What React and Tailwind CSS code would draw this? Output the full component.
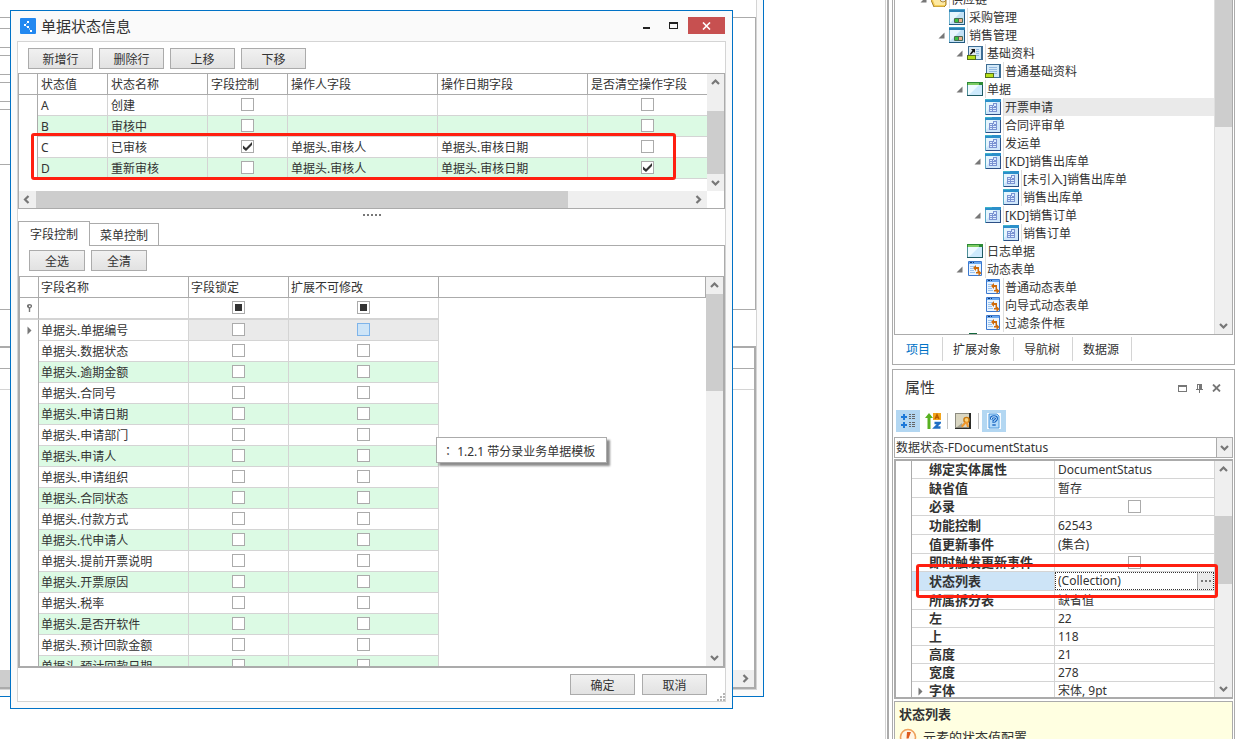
import clsx from 'clsx';

const FONT = "font-['Noto_Sans','Noto_Sans_CJK_SC',sans-serif]";

const estados = [
  { valor: 'A', nombre: '创建', control: false, operador: '', fecha: '', limpiar: false },
  { valor: 'B', nombre: '审核中', control: false, operador: '', fecha: '', limpiar: false },
  { valor: 'C', nombre: '已审核', control: true, operador: '单据头.审核人', fecha: '单据头.审核日期', limpiar: false },
  { valor: 'D', nombre: '重新审核', control: false, operador: '单据头.审核人', fecha: '单据头.审核日期', limpiar: true },
];

const campos = [
  '单据编号', '数据状态', '逾期金额', '合同号', '申请日期', '申请部门', '申请人', '申请组织', '合同状态',
  '付款方式', '代申请人', '提前开票说明', '开票原因', '税率', '是否开软件', '预计回款金额', '预计回款日期',
];

const arbol = [
  { nivel: 0, icono: 'carpeta', texto: '供应链', abierto: true },
  { nivel: 1, icono: 'modulo', texto: '采购管理' },
  { nivel: 1, icono: 'modulo', texto: '销售管理', abierto: true },
  { nivel: 2, icono: 'base', texto: '基础资料', abierto: true },
  { nivel: 3, icono: 'baseHoja', texto: '普通基础资料' },
  { nivel: 2, icono: 'ventana', texto: '单据', abierto: true },
  { nivel: 3, icono: 'documento', texto: '开票申请', activo: true },
  { nivel: 3, icono: 'documento', texto: '合同评审单' },
  { nivel: 3, icono: 'documento', texto: '发运单' },
  { nivel: 3, icono: 'documento', texto: '[KD]销售出库单', abierto: true },
  { nivel: 4, icono: 'documento', texto: '[未引入]销售出库单' },
  { nivel: 4, icono: 'documento', texto: '销售出库单' },
  { nivel: 3, icono: 'documento', texto: '[KD]销售订单', abierto: true },
  { nivel: 4, icono: 'documento', texto: '销售订单' },
  { nivel: 2, icono: 'ventana', texto: '日志单据' },
  { nivel: 2, icono: 'dinamico', texto: '动态表单', abierto: true },
  { nivel: 3, icono: 'dinamico', texto: '普通动态表单' },
  { nivel: 3, icono: 'dinamico', texto: '向导式动态表单' },
  { nivel: 3, icono: 'dinamico', texto: '过滤条件框' },
];

const propiedades = [
  { nombre: '绑定实体属性', valor: 'DocumentStatus' },
  { nombre: '缺省值', valor: '暂存', alta: true },
  { nombre: '必录', tipo: 'check' },
  { nombre: '功能控制', valor: '62543', alta: true },
  { nombre: '值更新事件', valor: '(集合)', alta: true },
  { nombre: '即时触发更新事件', tipo: 'check' },
  { nombre: '状态列表', valor: '(Collection)', tipo: 'editor', alta: true },
  { nombre: '所属拆分表', valor: '缺省值', alta: true },
  { nombre: '左', valor: '22' },
  { nombre: '上', valor: '118' },
  { nombre: '高度', valor: '21' },
  { nombre: '宽度', valor: '278' },
  { nombre: '字体', valor: '宋体, 9pt', expandible: true },
];

const nivelPadding = ['pl-[24px]', 'pl-[42px]', 'pl-[60px]', 'pl-[78px]', 'pl-[96px]'];

// Clases comunes de las dos grillas del diálogo
const TH = 'h-[21px] p-0 pt-[2px] border-b border-r border-[#ababab] font-normal text-left leading-[18px] whitespace-nowrap';
const TD = 'h-[21px] p-0 pt-[2px] border-b border-[#d4d4d4] leading-[18px] whitespace-nowrap';
const TD_CHECK = 'h-[21px] p-0 pt-[3px] border-b border-[#d4d4d4] align-top';

function Chevron({ dir }) {
  const puntos = {
    up: '4,8 7.5,4.5 11,8',
    down: '4,5 7.5,8.5 11,5',
    left: '8.5,3 5,6.5 8.5,10',
    right: '5.5,3 9,6.5 5.5,10',
  };
  return (
    <svg width="15" height="13" viewBox="0 0 15 13" className="block">
      <polyline points={puntos[dir]} fill="none" stroke="#777" strokeWidth="2.2" />
    </svg>
  );
}

function ScrollButton({ dir, label }) {
  return (
    <button type="button" aria-label={label} className="w-[17px] h-[17px] shrink-0 bg-[#efefef] flex items-center justify-center">
      <Chevron dir={dir} />
    </button>
  );
}

function Check({ label, checked = false, mixed = false, focused = false }) {
  return (
    <span className="relative block w-[13px] h-[13px] mx-auto">
      <input
        type="checkbox"
        aria-label={label}
        defaultChecked={checked}
        className={clsx(
          'peer appearance-none block w-[13px] h-[13px] border',
          focused ? 'bg-[#cde4f7] border-[#7eb4ea]' : 'bg-white border-[#ababab]',
        )}
      />
      {mixed ? (
        <span className="absolute left-[3px] top-[3px] w-[7px] h-[7px] bg-[#333] pointer-events-none" />
      ) : (
        <svg viewBox="0 0 13 13" className="absolute inset-0 w-[13px] h-[13px] pointer-events-none hidden peer-checked:block">
          <path d="M2 5.5 L5 8 L11 2 V5 L5 11 L2 8.5 Z" fill="#333" />
        </svg>
      )}
    </span>
  );
}

function WinButton({ children, ancho = 'w-[65px]' }) {
  return (
    <button
      type="button"
      className={clsx('h-[21px] border border-[#ababab] bg-linear-to-b from-[#f1f1f1] to-[#e2e2e2] text-xs leading-[21px] text-center', ancho)}
    >
      {children}
    </button>
  );
}

function TreeIcon({ tipo }) {
  if (tipo === 'carpeta') {
    return (
      <svg width="16" height="16" viewBox="0 0 16 16">
        <path d="M1 4 H7 L8 2 H14 L15 5 V14 L13 16 H3 L0 9 Z" fill="#f5ce55" stroke="#a7802b" />
        <path d="M2 9 H14 V14 H4 Z" fill="#fde9a3" />
        <circle cx="12" cy="8" r="3" fill="#e9ecec" stroke="#b18b3c" />
      </svg>
    );
  }
  if (tipo === 'documento') {
    return (
      <svg width="16" height="16" viewBox="0 0 16 16">
        <rect width="16" height="16" fill="#5aa7c4" />
        <path d="M0 0 H16 V3 H0 Z" fill="#2b8fca" />
        <path d="M0 0 H7 V1 H0 Z" fill="#3fb5c9" />
        <path d="M15 3 H16 V16 H1 V15 H15 Z" fill="#2c4f85" />
        <path d="M1 3 H15 V15 H1 Z" fill="#cfe6fa" />
        <path d="M1 3 H11 L1 13 Z" fill="#e6f5fd" />
        <path d="M4 6 H8 V4 H12 V13 H4 Z" fill="#7b93d2" />
        <path d="M5 7 H7 V8 H5Z M5 9 H7 V10 H5Z M5 11 H7 V12 H5Z M8 7 H9 V8 H8Z M9 5 H11 V7 H9Z M8 9 H11 V10 H8Z M8 11 H11 V12 H8Z" fill="#dcecff" />
      </svg>
    );
  }
  if (tipo === 'ventana') {
    return (
      <svg width="16" height="16" viewBox="0 0 16 16">
        <rect y="1" width="16" height="14" fill="#4d8f98" />
        <path d="M1 4 H15 V14 H1 Z" fill="#cdeafc" />
        <path d="M1 4 H12 L4 12 L1 14 Z" fill="#effaff" />
        <path d="M0 1 H16 V4 H0 Z" fill="#2d8a36" />
        <path d="M1 2 H12 V4 H1 Z" fill="#7ccb62" />
        <path d="M15 4 H16 V15 H0 V14 H15 Z" fill="#1d5a63" />
      </svg>
    );
  }
  if (tipo === 'modulo') {
    return (
      <svg width="16" height="16" viewBox="0 0 16 16">
        <rect width="16" height="16" fill="#6fb2d0" />
        <path d="M1 3 H15 V15 H1 Z" fill="#c3e1f5" />
        <path d="M1 3 H12 L1 14 Z" fill="#e9f6fd" />
        <path d="M0 0 H16 V3 H0 Z" fill="#2a7fb3" />
        <path d="M0 0 H16 V1 H0 Z" fill="#46a5cf" />
        <path d="M15 3 H16 V16 H0 V15 H15 Z" fill="#235a80" />
        <rect x="5" y="9" width="9" height="5" rx="1" fill="#4a6b4f" />
        <path d="M6 10 H9 V13 H6 Z" fill="#38c03e" />
        <path d="M10 10 H13 V13 H10 Z" fill="#efb08e" />
      </svg>
    );
  }
  if (tipo === 'base' || tipo === 'baseHoja') {
    return (
      <svg width="16" height="16" viewBox="0 0 16 16">
        <path d="M1 1 H16 V15 H1 Z" fill="#3d6d94" />
        <path d="M2 2 H14 V14 H2 Z" fill="#d3e9f8" />
        <path d="M4 4 H12 V5 H4Z M4 6 H12 V7 H4Z M4 8 H12 V9 H4Z M9 10 H12 V11 H9Z" fill="#93b8e0" />
        <path d="M0 10 H9 V15 H0 Z" fill="#55701c" />
        <path d="M1 11 H8 V14 H1 Z" fill="#b6e01c" />
        {tipo === 'base' && (
          <>
            <path d="M2 3 H9 V10 H2 Z" fill="#dfe8ee" />
            <path d="M4 4 H8 V8 L6.8 6.8 L4 9.5 H2.5 L5.4 5.4 Z" fill="#111" />
          </>
        )}
      </svg>
    );
  }
  return (
    <svg width="16" height="16" viewBox="0 0 16 16">
      <rect x="1" width="14" height="15" rx="1" fill="#3b78cf" />
      <path d="M2 3 H14 V14 H2 Z" fill="#e9f4ff" />
      <path d="M2 1 H14 V3 H2 Z" fill="#6aa8f0" />
      <path d="M3 1 H5 V2 H3Z M6 1 H7 V2 H6Z" fill="#12386f" />
      <path d="M3 5 H9 V6 H3Z M3 7 H6 V8 H3Z M3 9 H7 V10 H3Z M3 11 H8 V12 H3Z" fill="#9cc3ec" />
      <path d="M6 7 L9 4 V6 H12 V8 H9 V10 Z" fill="#cf6a08" />
      <path d="M14.5 12 L11.5 9 V11 H9 V12.5 H11.5 V15 Z" fill="#cf6a08" />
      <path d="M10.5 7 H12 V11 H10.5 Z" fill="#cf6a08" />
    </svg>
  );
}

function StateGrid() {
  const th = clsx(TH, 'pl-[3px]');
  const td = clsx(TD, 'border-r pl-[3px]');
  return (
    <div className="border border-[#ababab]">
      <div className="flex h-[117px]">
        <div className="relative flex-1 min-w-0">
          <table className="w-full table-fixed border-separate border-spacing-0 text-xs">
            <colgroup>
              <col className="w-[19px]" />
              <col className="w-[70px]" />
              <col className="w-[100px]" />
              <col className="w-[80px]" />
              <col className="w-[150px]" />
              <col className="w-[150px]" />
              <col />
            </colgroup>
            <thead>
              <tr>
                <th className={th} aria-label="行" />
                <th className={th}>状态值</th>
                <th className={th}>状态名称</th>
                <th className={th}>字段控制</th>
                <th className={th}>操作人字段</th>
                <th className={th}>操作日期字段</th>
                <th className={clsx(th, 'border-r-0')}>是否清空操作字段</th>
              </tr>
            </thead>
            <tbody>
              {estados.map((e, i) => (
                <tr key={e.valor} className={i % 2 ? 'bg-[#dcfae4]' : 'bg-white'}>
                  <td className="p-0 bg-white border-r border-[#ababab]" />
                  <td className={td}>{e.valor}</td>
                  <td className={td}>{e.nombre}</td>
                  <td className={clsx(TD_CHECK, 'border-r')}><Check label={`${e.nombre} 字段控制`} checked={e.control} /></td>
                  <td className={td}>{e.operador}</td>
                  <td className={td}>{e.fecha}</td>
                  <td className={TD_CHECK}><Check label={`${e.nombre} 是否清空操作字段`} checked={e.limpiar} /></td>
                </tr>
              ))}
            </tbody>
          </table>
          <div className="absolute left-[12px] top-[59px] w-[645px] h-[47px] border-3 border-[#ff1f10] rounded-[3px] pointer-events-none" />
        </div>
        <div className="w-[17px] bg-[#efefef] flex flex-col">
          <ScrollButton dir="up" label="向上滚动" />
          <div className="h-5" />
          <div className="flex-1 bg-[#cdcdcd]" />
          <ScrollButton dir="down" label="向下滚动" />
        </div>
      </div>
      <div className="flex h-[17px]">
        <ScrollButton dir="left" label="向左滚动" />
        <div className="w-[532px] bg-[#cdcdcd]" />
        <div className="flex-1 bg-[#efefef]" />
        <ScrollButton dir="right" label="向右滚动" />
        <div className="w-[17px] bg-white" />
      </div>
    </div>
  );
}

function FieldGrid() {
  const th = clsx(TH, 'pl-[2px]');
  const indicador = 'p-0 bg-white border-r border-[#ababab]';
  return (
    <div className="flex-1 min-h-0 flex border border-[#ababab]">
      <div className="flex-1 min-w-0 overflow-hidden">
        <table className="w-full table-fixed border-separate border-spacing-0 text-xs">
          <colgroup>
            <col className="w-[19px]" />
            <col className="w-[150px]" />
            <col className="w-[100px]" />
            <col className="w-[150px]" />
            <col />
          </colgroup>
          <thead>
            <tr>
              <th className={th} aria-label="行" />
              <th className={th}>字段名称</th>
              <th className={th}>字段锁定</th>
              <th className={th}>扩展不可修改</th>
              <th className={th} aria-label="空白" />
            </tr>
          </thead>
          <tbody>
            <tr>
              <td className={clsx(indicador, 'h-[22px] border-b-2 border-b-[#d4d4d4]')}>
                <svg width="9" height="10" viewBox="0 0 9 10" className="mx-auto block">
                  <path d="M2 2 Q4.5 0 7 2 V4 L5.2 5.5 V9 H3.8 V5.5 L2 4 Z" fill="#777" />
                  <path d="M4 2.5 H5.5 V4 H4 Z" fill="#fff" />
                </svg>
              </td>
              <td className={clsx(TD, 'border-r border-b-2')} />
              <td className={clsx(TD_CHECK, 'border-r border-b-2')}><Check label="筛选 字段锁定" mixed /></td>
              <td className={clsx(TD_CHECK, 'border-r border-b-2')}><Check label="筛选 扩展不可修改" mixed /></td>
              <td />
            </tr>
            {campos.map((campo, i) => {
              const fondo = i === 0 ? 'bg-[#eaeaea]' : i % 2 === 0 ? 'bg-[#dcfae4]' : 'bg-white';
              return (
                <tr key={campo}>
                  <td className={indicador}>
                    {i === 0 && (
                      <svg width="5" height="9" viewBox="0 0 5 9" className="mx-auto block">
                        <path d="M0.5 0.5 L4.5 4.5 L0.5 8.5 Z" fill="#777" />
                      </svg>
                    )}
                  </td>
                  <td className={clsx(TD, 'border-r pl-[2px]', i === 0 ? 'bg-white' : fondo)}>单据头.{campo}</td>
                  <td className={clsx(TD_CHECK, 'border-r', fondo)}><Check label={`${campo} 字段锁定`} /></td>
                  <td className={clsx(TD_CHECK, 'border-r', fondo)}><Check label={`${campo} 扩展不可修改`} focused={i === 0} /></td>
                  <td />
                </tr>
              );
            })}
          </tbody>
        </table>
      </div>
      <div className="w-[17px] bg-[#efefef] flex flex-col">
        <ScrollButton dir="up" label="向上滚动" />
        <div className="h-[97px] bg-[#cdcdcd]" />
        <div className="flex-1" />
        <ScrollButton dir="down" label="向下滚动" />
      </div>
    </div>
  );
}

function BackWindow() {
  return (
    <div className="absolute left-0 top-0 w-[764px] h-[697px] bg-[#fafafa] border-r border-b border-[#0072c6] pr-[6px] pb-[6px]">
      <div className="h-full bg-white border-r border-b border-[#d4d4d4] pt-[17px] flex flex-col gap-[36px]">
        <div className="h-[293px] border-y border-r border-[#ababab] pt-[10px] flex flex-col gap-[7px]">
          <div className="h-5 w-1/2 border-y border-[#ababab]" />
          <div className="h-5 w-1/2 border-y border-[#ababab]" />
          <div className="h-5 w-1/2 border-y border-[#ababab]" />
          <div className="h-14 w-1/2 border-y border-[#ababab]" />
        </div>
        <div className="flex-1 border-y-2 border-r-2 border-[#ababab] flex flex-col">
          <div className="h-[21px] border-b border-[#ababab]" />
          <div className="h-[21px] border-b border-[#d4d4d4]" />
          <div className="flex-1" />
          <div className="h-[17px] flex bg-[#efefef]">
            <div className="w-1/2 bg-[#cdcdcd]" />
            <div className="flex-1" />
            <ScrollButton dir="right" label="向右滚动" />
          </div>
        </div>
      </div>
    </div>
  );
}

function StatusDialog() {
  return (
    <section
      role="dialog"
      aria-label="单据状态信息"
      className="absolute left-[10px] top-[10px] w-[723px] h-[699px] bg-[#fafafa] border border-[#0072c6] px-[6px] pb-[6px] flex flex-col"
    >
      <header className="h-[30px] flex items-center pl-[3px] pr-[1px]">
        <svg width="16" height="16" viewBox="0 0 16 16">
          <rect width="16" height="16" rx="1" fill="#2288f0" />
          <path d="M7 3 H9 V5 H7Z M4 6 H6 V8 H4Z M7 8 H9 V10 H7Z M10 12 H12 V14 H10Z" fill="#fff" />
          <path d="M6 5 H7 V6 H6Z M6 8 H7 V9 H6Z M9 10 H10 V12 H9Z" fill="#8fc3fa" />
        </svg>
        <h1 className="ml-[5px] flex-1 text-[15px] leading-5">单据状态信息</h1>
        <div className="flex items-center self-start pt-[6px]">
          <button type="button" aria-label="最小化" className="w-[27px] h-[17px] flex items-center justify-center">
            <svg width="9" height="9" viewBox="0 0 9 9"><path d="M1 6 H8 V8 H1 Z" fill="#222" /></svg>
          </button>
          <button type="button" aria-label="最大化" className="w-[27px] h-[17px] flex items-center justify-center">
            <svg width="9" height="7" viewBox="0 0 9 7"><path d="M0 0 H9 V7 H0 Z M1 2 V6 H8 V2 Z" fill="#222" fillRule="evenodd" /></svg>
          </button>
          <button type="button" aria-label="关闭" className="w-[37px] h-[17px] ml-[1px] bg-[#c75050] flex items-center justify-center">
            <svg width="9" height="8" viewBox="0 0 9 8"><path d="M1 0.5 L8 7.5 M8 0.5 L1 7.5" stroke="#fff" strokeWidth="1.6" /></svg>
          </button>
        </div>
      </header>
      <div className="flex-1 min-h-0 bg-white border border-[#d4d4d4] flex flex-col">
        <div className="flex gap-[6px] pl-[10px] pt-[6px] pb-[4px]">
          <WinButton>新增行</WinButton>
          <WinButton>删除行</WinButton>
          <WinButton>上移</WinButton>
          <WinButton>下移</WinButton>
        </div>
        <StateGrid />
        <div className="h-3 pt-[5px] flex justify-center gap-[2px]">
          {[0, 1, 2, 3, 4].map((n) => (
            <span key={n} className="w-[2px] h-[2px] bg-[#777]" />
          ))}
        </div>
        <div role="tablist" className="flex items-end">
          <button type="button" role="tab" aria-selected="true" className="w-[72px] h-[25px] pt-[2px] border-t border-x border-[#ababab] text-xs">
            字段控制
          </button>
          <button type="button" role="tab" aria-selected="false" className="w-[69px] h-[23px] pt-[2px] border-t border-r border-b border-[#ababab] text-xs">
            菜单控制
          </button>
          <div className="flex-1 border-b border-[#ababab]" />
        </div>
        <div className="flex-1 min-h-0 border-x border-b border-[#ababab] flex flex-col">
          <div className="flex gap-[6px] pl-[10px] pt-[4px] pb-[5px]">
            <WinButton ancho="w-[56px]">全选</WinButton>
            <WinButton ancho="w-[56px]">全清</WinButton>
          </div>
          <FieldGrid />
        </div>
        <footer className="relative h-[33px] flex justify-end gap-[7px] pt-[6px] pr-[18px]">
          <WinButton>确定</WinButton>
          <WinButton>取消</WinButton>
          <svg width="8" height="8" viewBox="0 0 8 8" className="absolute right-0 bottom-0">
            <path d="M6 0 H8 V2 H6Z M3 3 H5 V5 H3Z M6 3 H8 V5 H6Z M0 6 H2 V8 H0Z M3 6 H5 V8 H3Z M6 6 H8 V8 H6Z" fill="#b5b5b5" />
          </svg>
        </footer>
      </div>
    </section>
  );
}

function TreeRow({ nodo }) {
  return (
    <li className={clsx('h-[18px] flex items-center', nivelPadding[nodo.nivel])}>
      <span className="w-[12px] shrink-0">
        {nodo.abierto && (
          <svg width="7" height="7" viewBox="0 0 7 7" className="ml-[1px]">
            <path d="M6.5 0.5 V6.5 H0.5 Z" fill="#777" />
          </svg>
        )}
      </span>
      <span className="w-[19px] h-[18px] shrink-0 border-r border-[#dedede] flex items-center">
        <TreeIcon tipo={nodo.icono} />
      </span>
      <a
        href="#arbol"
        className={clsx('flex-1 h-[18px] pl-[1px] text-xs leading-5 whitespace-nowrap', nodo.activo && 'bg-[#eaeaea]')}
      >
        {nodo.texto}
      </a>
    </li>
  );
}

function ProjectPanel() {
  return (
    <section className="h-[365px] shrink-0 border-x border-b border-[#ababab] px-[1px] flex flex-col">
      <div className="h-[335px] border-x border-b border-[#ababab] flex overflow-hidden">
        <ul className="flex-1 -mt-[10px]">
          {arbol.map((nodo, i) => (
            <TreeRow key={i} nodo={nodo} />
          ))}
          <li className="pl-[72px]">
            <span className="block ml-[2px] w-[8px] h-[3px] bg-[#12683c] mt-[1px]" />
          </li>
        </ul>
        <div className="w-[18px] border-l border-[#dedede] bg-[#efefef] flex flex-col">
          <div className="h-[127px] bg-[#cdcdcd]" />
          <div className="flex-1" />
          <ScrollButton dir="down" label="向下滚动" />
        </div>
      </div>
      <div role="tablist" className="flex pl-[2px] pt-[2px]">
        {['项目', '扩展对象', '导航树', '数据源'].map((tab, i) => (
          <button
            key={tab}
            type="button"
            role="tab"
            aria-selected={i === 0}
            className={clsx('h-6 pt-[2px] pl-[10px] pr-[12px] border-r border-[#d4d4d4] text-xs', i === 0 && 'text-[#0072c6]')}
          >
            {tab}
          </button>
        ))}
      </div>
    </section>
  );
}

function PropertyToolbar() {
  return (
    <div className="h-[22px] pl-[2px] flex items-center">
      <button type="button" aria-label="按分类排列" className="w-6 h-[22px] bg-[#b3d7f2] flex items-center justify-center">
        <svg width="16" height="16" viewBox="0 0 16 16">
          <path d="M3 1 H5 V3 H7 V5 H5 V7 H3 V5 H1 V3 H3Z M3 9 H5 V11 H7 V13 H5 V15 H3 V13 H1 V11 H3Z" fill="#1c78d8" />
          <path d="M9 1 H11 V2 H9Z M12 1 H15 V2 H12Z M9 3 H11 V4 H9Z M12 3 H15 V4 H12Z M9 5 H11 V6 H9Z M12 5 H15 V6 H12Z M9 9 H11 V10 H9Z M12 9 H15 V10 H12Z M9 11 H11 V12 H9Z M12 11 H15 V12 H12Z M9 13 H11 V14 H9Z M12 13 H15 V14 H12Z" fill="#666" />
        </svg>
      </button>
      <button type="button" aria-label="按字母排列" className="w-6 h-[22px] ml-[1px] flex items-center justify-center">
        <svg width="16" height="16" viewBox="0 0 16 16">
          <path d="M4 0 L8 5 H5.5 V16 H2.5 V5 H0 Z" fill="#58b121" />
          <path d="M8 0 H16 V7 H8 Z" fill="#f3a51c" />
          <path d="M10 6 L12 1.5 L14 6 M11 4.5 H13" fill="none" stroke="#b85c00" strokeWidth="1.3" />
          <path d="M9.5 10 H14.5 L10 14.5 H15.5" fill="none" stroke="#1f6fc4" strokeWidth="2.4" />
        </svg>
      </button>
      <span className="w-px h-4 bg-[#c4c4c4] ml-[2px] mr-[5px]" />
      <button type="button" aria-label="属性页" className="w-5 h-[22px] flex items-center justify-center">
        <svg width="16" height="16" viewBox="0 0 16 16">
          <rect width="15" height="15" fill="#8c8b80" />
          <rect x="1" y="1" width="14" height="13" fill="#d9d6c2" />
          <path d="M14 0 H16 V16 H0 V15 H14 Z" fill="#2b2b28" />
          <path d="M2 14 L7 10 L8 14 Z" fill="#a5a393" />
          <circle cx="11.5" cy="7" r="2.6" fill="#fbd27a" stroke="#c97a10" strokeWidth="1.4" />
          <path d="M10 8.5 L6 13 L7.5 14.5 L11 10.5 L12 14 H14 L13 9 Z" fill="#f0972c" />
        </svg>
      </button>
      <span className="w-px h-4 bg-[#c4c4c4] ml-[5px] mr-[3px]" />
      <button type="button" aria-label="帮助" className="w-6 h-[22px] bg-[#b3d7f2] flex items-center justify-center">
        <svg width="16" height="16" viewBox="0 0 16 16">
          <rect x="1" width="14" height="16" fill="#f7fbff" />
          <path d="M3 1 H11 L13 3 V15 H3 Z" fill="#b5dbfa" stroke="#4a98dd" />
          <path d="M5.5 6.5 V5 Q5.5 3.8 8 3.8 Q10.5 3.8 10.5 5.5 Q10.5 7 8 8.2 V10 M8 11 V13" fill="none" stroke="#1766c2" strokeWidth="3" />
          <path d="M5.5 6 V5 Q5.5 3.8 8 3.8 Q10.5 3.8 10.5 5.5 Q10.5 7 8 8.2 V9.5 M8 11.5 V12.5" fill="none" stroke="#d5ecff" />
        </svg>
      </button>
    </div>
  );
}

function PropertyRow({ prop }) {
  const editor = prop.tipo === 'editor';
  return (
    <tr className={prop.alta ? 'h-[19px]' : 'h-[18px]'}>
      <th
        scope="row"
        className={clsx(
          'relative p-0 pl-[17px] border-b border-r border-[#d4d4d4] text-left text-[13px] leading-[17px] font-bold whitespace-nowrap',
          editor && 'bg-[#cde4f7]',
        )}
      >
        {prop.expandible && (
          <svg width="5" height="9" viewBox="0 0 5 9" className="absolute left-[6px] top-[5px]">
            <path d="M0.5 0.5 L4.5 4.5 L0.5 8.5 Z" fill="#777" />
          </svg>
        )}
        {prop.nombre}
      </th>
      <td className="p-0 border-b border-r border-[#d4d4d4] text-xs leading-[17px] whitespace-nowrap">
        {prop.tipo === 'check' && <Check label={prop.nombre} />}
        {editor && (
          <div className="h-[18px] flex border border-dotted border-[#333]">
            <input
              aria-label={prop.nombre}
              defaultValue={prop.valor}
              className="flex-1 min-w-0 pl-[2px] bg-transparent outline-none leading-4"
            />
            <button type="button" aria-label="编辑集合" className="w-4 bg-[#eaeaea] border-l border-[#ababab] flex items-center justify-center gap-[2px]">
              <span className="w-[2px] h-[2px] bg-[#777]" />
              <span className="w-[2px] h-[2px] bg-[#777]" />
              <span className="w-[2px] h-[2px] bg-[#777]" />
            </button>
          </div>
        )}
        {!prop.tipo && <span className="pl-[3px]">{prop.valor}</span>}
      </td>
    </tr>
  );
}

function PropertyPanel() {
  return (
    <section className="flex-1 min-h-0 border-x border-t border-[#ababab] px-[1px] flex flex-col overflow-hidden">
      <header className="h-[40px] shrink-0 pl-[11px] pr-[12px] pb-[4px] flex items-center">
        <h2 className="flex-1 pb-[2px] text-[15px] leading-5">属性</h2>
        <div className="flex items-center gap-[8px]">
          <button type="button" aria-label="最大化">
            <svg width="9" height="7" viewBox="0 0 9 7" className="block"><path d="M0 0 H9 V7 H0 Z M1 2 V6 H8 V2 Z" fill="#777" fillRule="evenodd" /></svg>
          </button>
          <button type="button" aria-label="固定">
            <svg width="9" height="9" viewBox="0 0 9 9" className="block"><path d="M2 0 H7 V5 H8 V6 H5 V9 H4 V6 H1 V5 H2 Z M3 1 V5 H4 V1 Z" fill="#777" fillRule="evenodd" /></svg>
          </button>
          <button type="button" aria-label="关闭">
            <svg width="9" height="8" viewBox="0 0 9 8" className="block"><path d="M1 0.5 L8 7.5 M8 0.5 L1 7.5" stroke="#777" strokeWidth="1.8" /></svg>
          </button>
        </div>
      </header>
      <PropertyToolbar />
      <div className="relative mt-[5px] shrink-0">
        <select aria-label="对象" className="appearance-none block w-full h-[21px] border border-[#ababab] bg-white pl-[1px] text-xs leading-[19px]">
          <option>数据状态-FDocumentStatus</option>
        </select>
        <span className="absolute right-px top-px w-[16px] h-[19px] border-l border-[#ababab] bg-[#efefef] flex items-center justify-center pointer-events-none">
          <Chevron dir="down" />
        </span>
      </div>
      <div className="relative mt-[1px] shrink-0">
        <div className="h-[240px] border-y-2 border-l-2 border-r border-[#ababab] flex overflow-hidden">
          <div className="w-4 shrink-0 border-r border-[#ababab]" />
          <div className="flex-1 min-w-0">
            <table className="w-full table-fixed border-separate border-spacing-0">
              <colgroup>
                <col className="w-[143px]" />
                <col />
              </colgroup>
              <tbody>
                {propiedades.map((prop) => (
                  <PropertyRow key={prop.nombre} prop={prop} />
                ))}
              </tbody>
            </table>
          </div>
          <div className="w-[17px] bg-[#efefef] flex flex-col">
            <ScrollButton dir="up" label="向上滚动" />
            <div className="h-[38px]" />
            <div className="h-[68px] bg-[#cdcdcd]" />
            <div className="flex-1" />
            <ScrollButton dir="down" label="向下滚动" />
          </div>
        </div>
        <div className="absolute left-[22px] top-[105px] w-[302px] h-[34px] border-3 border-[#ff1f10] rounded-[3px] pointer-events-none" />
      </div>
      <div className="mt-[2px] h-[60px] shrink-0 border border-[#ababab] bg-[#ffffe1] pl-[4px] pt-[3px]">
        <h3 className="text-[13px] leading-[19px] font-bold">状态列表</h3>
        <p className="mt-[3px] flex items-center text-[13px] leading-5">
          <svg width="18" height="18" viewBox="0 0 18 18" className="mr-[6px]">
            <circle cx="9" cy="9" r="7.5" fill="#fff6e6" stroke="#efa25c" strokeWidth="1.6" />
            <path d="M8 4 L12 4 L9.5 10.5 L7.5 10.5 Z M7 12 H9 V14 H7 Z" fill="#dd5a1e" />
          </svg>
          元素的状态值配置
        </p>
      </div>
    </section>
  );
}

export default function App() {
  return (
    <div className={clsx('h-screen overflow-hidden flex bg-white text-[#333]', FONT)}>
      <main className="relative flex-1 min-w-0 overflow-hidden">
        <BackWindow />
        <StatusDialog />
        <div
          role="tooltip"
          className="absolute left-[436px] top-[437px] h-[26px] border border-[#ababab] bg-white pl-[5px] pr-[11px] text-xs leading-[26px] whitespace-nowrap shadow-[3px_3px_2px_rgba(0,0,0,0.45)]"
        >
          <span className="font-['Noto_Sans_CJK_TC',sans-serif]">：</span> 1.2.1 带分录业务单据模板
        </div>
      </main>
      <aside className="w-[352px] shrink-0 border-l border-[#d4d4d4] pl-[1px]">
        <div className="h-full border-l-2 border-[#ababab] pl-[3px] pr-[2px] flex flex-col gap-[4px]">
          <ProjectPanel />
          <PropertyPanel />
        </div>
      </aside>
    </div>
  );
}
